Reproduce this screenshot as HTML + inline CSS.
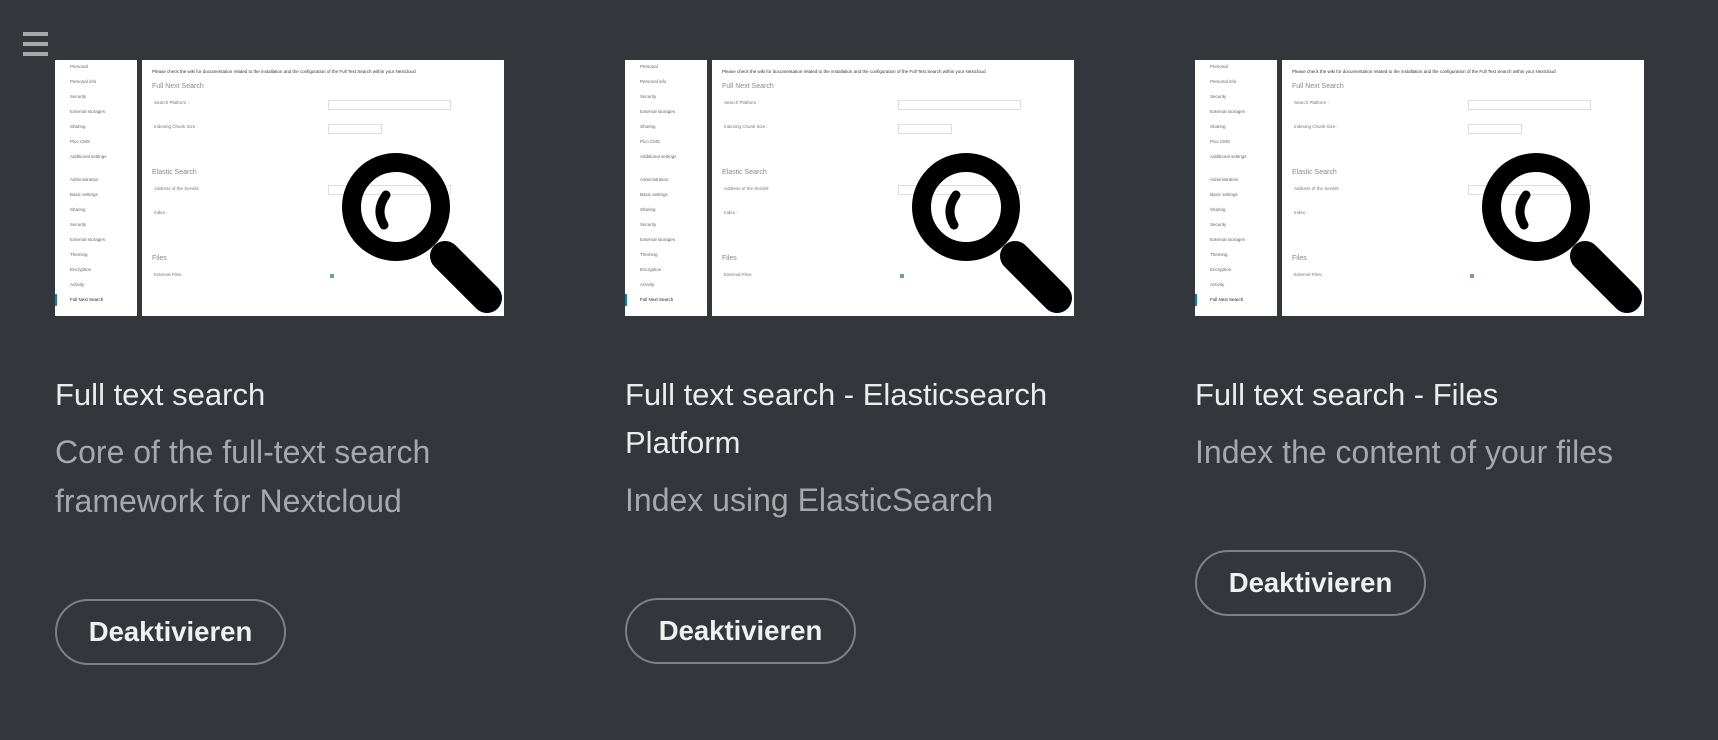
<!DOCTYPE html>
<html><head><meta charset="utf-8"><style>
body{margin:0;width:1718px;height:740px;background:#33363b;overflow:hidden;font-family:"Liberation Sans",sans-serif;position:relative}
.ham{position:absolute;left:23px;width:25px;height:4px;background:#a8a8a8}
.card{position:absolute;top:60px;width:470px}
.shot{position:relative;width:449px;height:256px;background:#33363b}
.side{position:absolute;left:0;top:0;width:82px;height:256px;background:#fff;font-size:4.5px;color:#666}
.side div{position:absolute;left:15px}
.main{position:absolute;left:87px;top:0;width:362px;height:256px;background:#fff;font-size:4.5px;color:#777}
.main div{position:absolute}
.h{font-size:7px;color:#888}
.inp{border:1px solid #ddd;height:8px}
.t{margin-top:311px;font-size:31px;line-height:48px;color:#ececec}
.d{margin-top:9px;font-size:32px;line-height:49px;color:#a6a8ab}
.b{margin-top:73px;width:227px;height:62px;border:2px solid #7d8085;border-radius:34px;color:#f0f0f0;font-weight:bold;font-size:27.5px;line-height:62px;text-align:center}
.abs{position:absolute;left:0;top:0;width:449px}
</style></head><body>
<div class="ham" style="top:32px"></div><div class="ham" style="top:42px"></div><div class="ham" style="top:52px"></div>

<div class="card" style="left:55px">
<div class="abs"><div class="shot">
 <div class="side"><div style="top:4px">Personal</div><div style="top:19px">Personal info</div><div style="top:34px">Security</div><div style="top:49px">External storages</div><div style="top:64px">Sharing</div><div style="top:79px">Pico CMS</div><div style="top:94px">Additional settings</div><div style="top:117px">Administration</div><div style="top:132px">Basic settings</div><div style="top:147px">Sharing</div><div style="top:162px">Security</div><div style="top:177px">External storages</div><div style="top:192px">Theming</div><div style="top:207px">Encryption</div><div style="top:222px">Activity</div><div style="top:237px;color:#222">Full Next Search</div><div style="left:0;top:234px;width:2px;height:12px;background:#0082c9"></div></div>
 <div class="main"><div style="left:10px;top:9px;color:#333">Please check the wiki for documentation related to the installation and the configuration of the Full Text Search within your Nextcloud</div>
 <div class="h" style="left:10px;top:23px">Full Next Search</div><div style="left:12px;top:40px">Search Platform :</div><div class="inp" style="left:186px;top:40px;width:121px"></div>
 <div style="left:12px;top:64px">Indexing Chunk Size :</div><div class="inp" style="left:186px;top:64px;width:52px"></div>
 <div class="h" style="left:10px;top:109px">Elastic Search</div><div style="left:12px;top:126px">Address of the Servlet:</div><div class="inp" style="left:186px;top:125px;width:121px"></div>
 <div style="left:12px;top:150px">Index :</div><div class="h" style="left:10px;top:195px">Files</div><div style="left:12px;top:212px">External Files:</div><div style="left:188px;top:214px;width:4px;height:4px;background:#6a8"></div></div>
 <svg style="position:absolute;left:0;top:0" width="449" height="256" viewBox="0 0 449 256"><circle cx="341" cy="147" r="44.5" fill="none" stroke="#000" stroke-width="19"/><line x1="390" y1="196" x2="432" y2="238" stroke="#000" stroke-width="30" stroke-linecap="round"/><path d="M331 135 Q320 150 329 165" fill="none" stroke="#000" stroke-width="9" stroke-linecap="round"/></svg>
</div></div>
<div class="t">Full text search</div>
<div class="d">Core of the full-text search<br>framework for Nextcloud</div>
<div class="b">Deaktivieren</div>
</div>

<div class="card" style="left:625px">
<div class="abs"><div class="shot">
 <div class="side"><div style="top:4px">Personal</div><div style="top:19px">Personal info</div><div style="top:34px">Security</div><div style="top:49px">External storages</div><div style="top:64px">Sharing</div><div style="top:79px">Pico CMS</div><div style="top:94px">Additional settings</div><div style="top:117px">Administration</div><div style="top:132px">Basic settings</div><div style="top:147px">Sharing</div><div style="top:162px">Security</div><div style="top:177px">External storages</div><div style="top:192px">Theming</div><div style="top:207px">Encryption</div><div style="top:222px">Activity</div><div style="top:237px;color:#222">Full Next Search</div><div style="left:0;top:234px;width:2px;height:12px;background:#0082c9"></div></div>
 <div class="main"><div style="left:10px;top:9px;color:#333">Please check the wiki for documentation related to the installation and the configuration of the Full Text Search within your Nextcloud</div>
 <div class="h" style="left:10px;top:23px">Full Next Search</div><div style="left:12px;top:40px">Search Platform :</div><div class="inp" style="left:186px;top:40px;width:121px"></div>
 <div style="left:12px;top:64px">Indexing Chunk Size :</div><div class="inp" style="left:186px;top:64px;width:52px"></div>
 <div class="h" style="left:10px;top:109px">Elastic Search</div><div style="left:12px;top:126px">Address of the Servlet:</div><div class="inp" style="left:186px;top:125px;width:121px"></div>
 <div style="left:12px;top:150px">Index :</div><div class="h" style="left:10px;top:195px">Files</div><div style="left:12px;top:212px">External Files:</div><div style="left:188px;top:214px;width:4px;height:4px;background:#6a8"></div></div>
 <svg style="position:absolute;left:0;top:0" width="449" height="256" viewBox="0 0 449 256"><circle cx="341" cy="147" r="44.5" fill="none" stroke="#000" stroke-width="19"/><line x1="390" y1="196" x2="432" y2="238" stroke="#000" stroke-width="30" stroke-linecap="round"/><path d="M331 135 Q320 150 329 165" fill="none" stroke="#000" stroke-width="9" stroke-linecap="round"/></svg>
</div></div>
<div class="t">Full text search - Elasticsearch<br>Platform</div>
<div class="d">Index using ElasticSearch</div>
<div class="b">Deaktivieren</div>
</div>

<div class="card" style="left:1195px">
<div class="abs"><div class="shot">
 <div class="side"><div style="top:4px">Personal</div><div style="top:19px">Personal info</div><div style="top:34px">Security</div><div style="top:49px">External storages</div><div style="top:64px">Sharing</div><div style="top:79px">Pico CMS</div><div style="top:94px">Additional settings</div><div style="top:117px">Administration</div><div style="top:132px">Basic settings</div><div style="top:147px">Sharing</div><div style="top:162px">Security</div><div style="top:177px">External storages</div><div style="top:192px">Theming</div><div style="top:207px">Encryption</div><div style="top:222px">Activity</div><div style="top:237px;color:#222">Full Next Search</div><div style="left:0;top:234px;width:2px;height:12px;background:#0082c9"></div></div>
 <div class="main"><div style="left:10px;top:9px;color:#333">Please check the wiki for documentation related to the installation and the configuration of the Full Text Search within your Nextcloud</div>
 <div class="h" style="left:10px;top:23px">Full Next Search</div><div style="left:12px;top:40px">Search Platform :</div><div class="inp" style="left:186px;top:40px;width:121px"></div>
 <div style="left:12px;top:64px">Indexing Chunk Size :</div><div class="inp" style="left:186px;top:64px;width:52px"></div>
 <div class="h" style="left:10px;top:109px">Elastic Search</div><div style="left:12px;top:126px">Address of the Servlet:</div><div class="inp" style="left:186px;top:125px;width:121px"></div>
 <div style="left:12px;top:150px">Index :</div><div class="h" style="left:10px;top:195px">Files</div><div style="left:12px;top:212px">External Files:</div><div style="left:188px;top:214px;width:4px;height:4px;background:#6a8"></div></div>
 <svg style="position:absolute;left:0;top:0" width="449" height="256" viewBox="0 0 449 256"><circle cx="341" cy="147" r="44.5" fill="none" stroke="#000" stroke-width="19"/><line x1="390" y1="196" x2="432" y2="238" stroke="#000" stroke-width="30" stroke-linecap="round"/><path d="M331 135 Q320 150 329 165" fill="none" stroke="#000" stroke-width="9" stroke-linecap="round"/></svg>
</div></div>
<div class="t">Full text search - Files</div>
<div class="d">Index the content of your files</div>
<div class="b">Deaktivieren</div>
</div>
</body></html>
